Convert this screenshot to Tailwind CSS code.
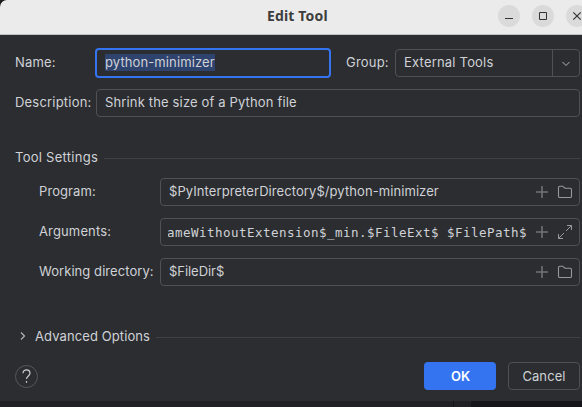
<!DOCTYPE html>
<html lang="en">
<head>
<meta charset="utf-8">
<title>Edit Tool</title>
<script src="https://cdn.jsdelivr.net/npm/@tailwindcss/browser@4"></script>
</head>
<body class="h-[407px] w-[582px] overflow-hidden bg-[#1f1f22] font-['Inter',sans-serif] text-[13px] leading-4 text-[#d0d2d7]">
<svg class="hidden">
  <symbol id="plus" viewBox="0 0 16 16"><path d="M8 2v12M2 8h12" stroke="#6f7277" stroke-width="1.6" fill="none"/></symbol>
  <symbol id="folder" viewBox="0 0 16 16"><path d="M1.500 3.500q0-1.300 1.300-1.300h3l2 2h5.400q1.300 0 1.300 1.300v6.700q0 1.300-1.300 1.300h-10.400q-1.300 0-1.300-1.300z" stroke="#95989e" stroke-width="1.100" fill="none"/></symbol>
</svg>
<main class="flex h-[401px] flex-col overflow-hidden rounded-tl-[7px] bg-[#2b2d30] shadow-[0_0_2px_1px_#111214]">
  <header class="flex h-[35px] shrink-0 border-b border-[#bfc1c3] bg-[#ebebeb]">
    <h1 class="ml-[267px] w-[231px] shrink-0 pt-2 font-['Noto_Sans',sans-serif] text-[14px] font-bold leading-4 tracking-[0.15px] text-[#3d3d3d]">Edit Tool</h1>
    <div class="flex gap-3 pt-[5px]">
      <svg class="size-[22px] shrink-0" viewBox="0 0 22 22"><circle cx="11" cy="11" r="11" fill="#dadada"/><path d="M7 13.500h8" stroke="#333"/></svg>
      <svg class="size-[22px] shrink-0" viewBox="0 0 22 22"><circle cx="11" cy="11" r="11" fill="#dadada"/><path d="M7.500 7.500h7v7h-7z" stroke="#333" fill="none"/></svg>
      <svg class="size-[22px] shrink-0" viewBox="0 0 22 22"><circle cx="11" cy="11" r="11" fill="#dadada"/><path d="M7.300 7.300l7.400 7.400M14.700 7.300l-7.400 7.400" stroke="#333" stroke-width="1.200"/></svg>
    </div>
  </header>

  <section class="mt-[13px] flex h-[30px] shrink-0 items-center pl-[15px]">
    <label class="w-20 pb-0.5 tracking-[0.2px]">Name:</label>
    <div class="flex h-[30px] w-[236px] items-center rounded-[4px] border-2 border-[#3574f0] pb-px pl-2"><span class="bg-[#2e436e] leading-[17px] tracking-[0.11px]">python-minimizer</span></div>
    <label class="ml-[15px] w-[49px] pb-0.5 tracking-[0.2px]">Group:</label>
    <div class="flex h-7 w-[185px] items-center rounded-[4px] border border-[#4e5157] pl-2">
      <span class="w-[148px] pb-0.5 tracking-[0.2px]">External Tools</span>
      <span class="flex h-full w-[27px] items-center justify-center border-l border-[#4e5157]"><svg class="size-4" viewBox="0 0 16 16"><path d="M4.500 7l3.500 3.500 3.500-3.500" stroke="#b0b3b8" fill="none"/></svg></span>
    </div>
  </section>

  <section class="mt-[11px] flex h-7 shrink-0 items-center pl-[15px]">
    <label class="w-[81px] pb-0.5 tracking-[0.2px]">Description:</label>
    <div class="flex h-7 w-[484px] items-center rounded-[4px] border border-[#4e5157] pl-2"><span class="pb-0.5 tracking-[0.15px]">Shrink the size of a Python file</span></div>
  </section>

  <h2 class="mt-8 flex h-4 shrink-0 items-center pl-[15px]"><span class="w-[89px] tracking-[0.27px]">Tool Settings</span><span class="mt-[3px] h-px w-[476px] bg-[#3f4145]"></span></h2>

  <section class="mt-[13px] flex shrink-0 flex-col gap-3 pl-[39px]">
    <div class="flex h-7 items-center">
      <label class="w-[121px] pb-0.5 tracking-[0.08px]">Program:</label>
      <div class="flex h-7 w-[420px] items-center rounded-[4px] border border-[#4e5157] pl-2 pr-1.5">
        <span class="flex-1 pb-0.5 tracking-[0.08px]">$PyInterpreterDirectory$/python-minimizer</span>
        <svg class="mr-[7px] size-4"><use href="#plus"/></svg><svg class="size-4"><use href="#folder"/></svg>
      </div>
    </div>
    <div class="flex h-7 items-center">
      <label class="w-[121px] pb-0.5 tracking-[0.14px]">Arguments:</label>
      <div class="flex h-7 w-[420px] items-center rounded-[4px] border border-[#4e5157] pl-[7px] pr-1.5">
        <span class="flex w-[359px] justify-end overflow-hidden whitespace-nowrap pt-px font-['DejaVu_Sans_Mono',monospace] text-[12.500px] tracking-[0.475px]">ameWithoutExtension$_min.$FileExt$ $FilePath$</span>
        <svg class="ml-auto mr-[7px] size-4"><use href="#plus"/></svg>
        <svg class="size-4" viewBox="0 0 16 16"><path d="M9 7l5.500-5.500M10 1.500h4.500v4.500M7 9l-5.500 5.500M1.500 10v4.500h4.500" stroke="#95989e" fill="none"/></svg>
      </div>
    </div>
    <div class="flex h-7 items-center">
      <label class="w-[121px] pb-0.5 tracking-[0.06px]">Working directory:</label>
      <div class="flex h-7 w-[420px] items-center rounded-[4px] border border-[#4e5157] pl-2 pr-1.5">
        <span class="flex-1 pb-0.5 tracking-[-0.05px]">$FileDir$</span>
        <svg class="mr-[7px] size-4"><use href="#plus"/></svg><svg class="size-4"><use href="#folder"/></svg>
      </div>
    </div>
  </section>

  <div class="mt-[42px] flex h-4 shrink-0 items-center pl-[15px]">
    <svg class="mr-1 size-4" viewBox="0 0 16 16"><path d="M6 4.500l3.500 3.500-3.500 3.500" stroke="#b0b3b8" stroke-width="1.200" fill="none"/></svg>
    <span class="w-[121px] tracking-[0.1px]">Advanced Options</span><span class="mt-[3px] h-px w-[424px] bg-[#3f4145]"></span>
  </div>

  <footer class="mt-[18px] flex h-7 shrink-0 items-center pl-[15px]">
    <svg class="mt-px size-[23px]" viewBox="0 0 23 23"><circle cx="11.500" cy="11.500" r="11" stroke="#55585e" fill="none"/><path d="M8 8.300c0-4.700 7-4.700 7 0 0 2.700-3.500 2.600-3.500 5.800M11.500 16v1.800" stroke="#ced0d6" stroke-width="1.200" fill="none"/></svg>
    <button class="ml-[386px] h-7 w-[72px] rounded-[4px] bg-[#3574f0] pl-px font-semibold text-white">OK</button>
    <button class="ml-3 h-7 w-[72px] rounded-[4px] border border-[#4e5157] tracking-[0.1px]">Cancel</button>
  </footer>
</main>
<div class="flex h-[6px]"><span class="w-[454px] border-r border-[#151518] bg-[#212024]"></span><span class="w-[17px] bg-[#212024]"></span><span class="flex-1 bg-[#161619]"></span></div>
</body>
</html>
